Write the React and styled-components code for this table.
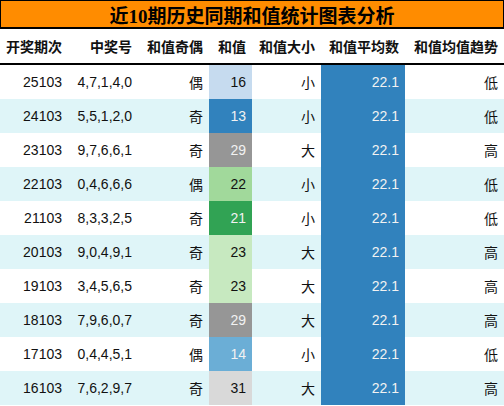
import React from 'react';
import styled, { createGlobalStyle } from 'styled-components';

const GlobalStyle = createGlobalStyle`
  html, body {
    margin: 0;
    padding: 0;
    background: #ffffff;
  }
  body {
    font-family: "Liberation Sans", "Noto Sans CJK SC", sans-serif;
    color: #111111;
  }
`;

const COLUMNS = '68px 70px 71px 43px 69px 84px 99px';

const StyledWrapper = styled.div`
  width: 504px;
  height: 406px;
  overflow: hidden;
  background: #ffffff;
`;

const Title = styled.div`
  height: 26px;
  background-color: #ff8c00;
  border: 1px solid #000;
  border-bottom-width: 2px;
  display: flex;
  align-items: center;
  justify-content: center;
  font-family: "Liberation Serif", "Noto Sans CJK SC", serif;
  font-weight: bold;
  font-size: 19px;
  color: #000;
`;

const Row = styled.div`
  display: grid;
  grid-template-columns: ${COLUMNS};
  height: 34px;
  background-color: ${({ striped }) => (striped ? '#dff5f8' : '#ffffff')};
  border-bottom: ${({ header }) => (header ? '2px solid #000' : 'none')};
`;

const HeadCell = styled.div`
  display: flex;
  align-items: center;
  justify-content: flex-end;
  padding-right: 6px;
  font-weight: bold;
  font-size: 14px;
  color: #111;
  white-space: nowrap;
`;

const Cell = styled.div`
  display: flex;
  align-items: center;
  justify-content: flex-end;
  padding-right: 6px;
  font-size: 14px;
  white-space: nowrap;
  background-color: ${({ bg }) => bg || 'transparent'};
  color: ${({ light }) => (light ? '#f2f2f2' : '#111')};
`;

const heat = {
  13: ['#3182bd', true],
  14: ['#6baed6', true],
  16: ['#c6dbef', false],
  21: ['#31a354', true],
  22: ['#a1d99b', false],
  23: ['#c7e9c0', false],
  29: ['#969696', true],
  31: ['#d9d9d9', false],
};

const rows = [
  ['25103', '4,7,1,4,0', '偶', 16, '小', '低'],
  ['24103', '5,5,1,2,0', '奇', 13, '小', '低'],
  ['23103', '9,7,6,6,1', '奇', 29, '大', '高'],
  ['22103', '0,4,6,6,6', '偶', 22, '小', '低'],
  ['21103', '8,3,3,2,5', '奇', 21, '小', '低'],
  ['20103', '9,0,4,9,1', '奇', 23, '大', '高'],
  ['19103', '3,4,5,6,5', '奇', 23, '大', '高'],
  ['18103', '7,9,6,0,7', '奇', 29, '大', '高'],
  ['17103', '0,4,4,5,1', '偶', 14, '小', '低'],
  ['16103', '7,6,2,9,7', '奇', 31, '大', '高'],
];

const headers = ['开奖期次', '中奖号', '和值奇偶', '和值', '和值大小', '和值平均数', '和值均值趋势'];

const App = () => (
  <StyledWrapper>
    <GlobalStyle />
    <Title>近10期历史同期和值统计图表分析</Title>
    <Row header>
      {headers.map((h) => (
        <HeadCell key={h}>{h}</HeadCell>
      ))}
    </Row>
    {rows.map(([issue, nums, parity, sum, size, trend], i) => (
      <Row key={issue} striped={i % 2 === 1}>
        <Cell>{issue}</Cell>
        <Cell>{nums}</Cell>
        <Cell>{parity}</Cell>
        <Cell bg={heat[sum][0]} light={heat[sum][1]}>{sum}</Cell>
        <Cell>{size}</Cell>
        <Cell bg="#3182bd" light>22.1</Cell>
        <Cell>{trend}</Cell>
      </Row>
    ))}
  </StyledWrapper>
);

export default App;
